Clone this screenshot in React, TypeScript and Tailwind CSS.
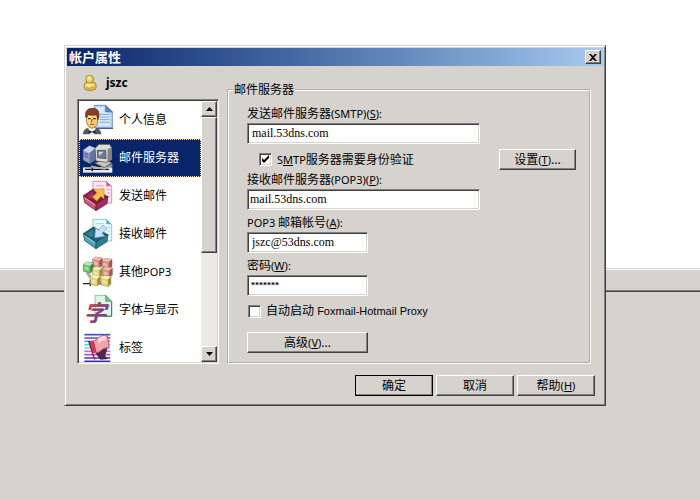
import type { ReactNode } from "react"

const FACE = "bg-[#d6d3ce]"
const RAISED =
  "border border-t-white border-l-white border-r-[#404040] border-b-[#404040] shadow-[inset_-1px_-1px_0_#808080]"
const SUNKEN =
  "border border-t-[#808080] border-l-[#808080] border-r-white border-b-white shadow-[inset_1px_1px_0_#404040,inset_-1px_-1px_0_#d6d3ce]"

// Latin runs sit one size below the Chinese text
function Latin({ children }: { children: ReactNode }) {
  return <span className="text-[11px]">{children}</span>
}

function Key({ letter }: { letter: string }) {
  return (
    <Latin>
      (<span className="underline underline-offset-1">{letter}</span>)
    </Latin>
  )
}

function PushButton({ children, className = "", primary = false }: { children: ReactNode; className?: string; primary?: boolean }) {
  return (
    <button
      type="button"
      className={`h-[21px] shrink-0 leading-4 ${FACE} ${RAISED} ${primary ? "outline outline-1 -outline-offset-1 outline-black" : ""} ${className}`}
    >
      {children}
    </button>
  )
}

function Field({ id, label, value, className }: { id: string; label: ReactNode; value: string; className: string }) {
  return (
    <div className="flex flex-col gap-px">
      <label htmlFor={id} className="leading-4">{label}</label>
      <input
        id={id}
        type="text"
        defaultValue={value}
        className={`h-[21px] bg-white font-['Liberation_Serif',serif] outline-none ${SUNKEN} ${className}`}
      />
    </div>
  )
}

function CheckBox({ id, checked = false, children }: { id: string; checked?: boolean; children: ReactNode }) {
  return (
    <div className="flex h-4 items-center gap-[5px]">
      <span className="grid">
        <input
          id={id}
          type="checkbox"
          defaultChecked={checked}
          className={`peer col-start-1 row-start-1 size-[13px] appearance-none bg-white ${SUNKEN}`}
        />
        <svg viewBox="0 0 13 13" className="pointer-events-none col-start-1 row-start-1 hidden size-[13px] peer-checked:block">
          <path d="M3 5v3l2 2 5-5V2L5 7z" fill="#000" />
        </svg>
      </span>
      <label htmlFor={id} className="leading-4">{children}</label>
    </div>
  )
}

/* ---------- icons ---------- */

function UserIcon() {
  return (
    <svg viewBox="0 0 42 48" className="h-4 w-[14px]">
      <defs>
        <radialGradient id="gold" cx="40%" cy="35%">
          <stop offset="0" stopColor="#fff6b4" />
          <stop offset="1" stopColor="#eabf45" />
        </radialGradient>
      </defs>
      <rect x="3" y="21" width="37" height="25" rx="12" fill="url(#gold)" stroke="#8a6a20" strokeWidth="2" />
      <circle cx="20" cy="13" r="12" fill="url(#gold)" stroke="#8a6a20" strokeWidth="2" />
      <path d="M10 38q10 5 20-1" fill="none" stroke="#c9962a" strokeWidth="3" />
    </svg>
  )
}

function PersonIcon() {
  return (
    <>
      <path d="M34 1h34l20 20v48H34z" fill="#b9d4f5" stroke="#4469ae" strokeWidth="2" />
      <path d="M40 6h24v14h18v42H40z" fill="#dbe9fb" />
      <path d="M68 1v20h20z" fill="#5b86c8" stroke="#36599c" strokeWidth="1.5" />
      <path d="M50 28h30M50 36h30M50 44h30M50 52h30" stroke="#7ea6dc" strokeWidth="3" />
      <path d="M36 70h54" stroke="#274684" strokeWidth="3" />
      <path d="M0 88q0-18 18-20h18q18 2 19 20z" fill="#565656" />
      <path d="M16 68h22l-4 20H20z" fill="#f4f4f4" />
      <path d="M17 75l10 5 10-5v11l-10-4-10 4z" fill="#222" />
      <path d="M10 27h34v25q-3 15-17 18Q13 66 10 50z" fill="#f7c871" stroke="#8a5424" strokeWidth="2" />
      <path d="M12 30h14v34q-11-4-13-16z" fill="#ffe674" />
      <path d="M8 36Q4 12 26 10q24-1 22 22l-3 12-4-15q-14 3-27 0l-2 9z" fill="#8a3f2a" stroke="#4b2414" strokeWidth="2" />
      <path d="M15 41h8M30 41h8" stroke="#3d2514" strokeWidth="4" />
      <path d="M26 42v9h-4M20 58h13" fill="none" stroke="#a94a24" strokeWidth="3" />
    </>
  )
}

function ServerIcon() {
  return (
    <>
      <path d="M0 73h88v16H0z" fill="#e8e8ea" />
      <path d="M6 79h72M28 73v12" stroke="#111" strokeWidth="4" />
      <path d="M0 22L19 8l19 8v34L20 62 0 52z" fill="#8e9cc8" stroke="#39446e" strokeWidth="2" />
      <path d="M0 22L19 8l19 8-18 14z" fill="#c9d1ec" />
      <path d="M20 30l18-14v34L20 62z" fill="#66739f" />
      <path d="M4 30l12 6M4 38l12 6" stroke="#4a5684" strokeWidth="3" />
      <path d="M34 60l32-10 22 10-24 14z" fill="#c7c7c2" stroke="#444" strokeWidth="2" />
      <path d="M36 16l12-12h32l6 10v36l-14 8-33-4z" fill="#dcdcd8" stroke="#454545" strokeWidth="2" />
      <path d="M74 18l12-5v36l-13 8z" fill="#84847f" />
      <path d="M43 22h25l1 25-25-3z" fill="#6c7c96" stroke="#303b50" strokeWidth="2" />
      <path d="M47 26h15l-14 13z" fill="#c3d0e0" />
      <path d="M24 70l40 8 24-12" fill="none" stroke="#b6b6b4" strokeWidth="5" />
    </>
  )
}

function TrayIcon({ tone, page, line, arrow, incoming = false }: { tone: string[]; page: string; line: string; arrow: string; incoming?: boolean }) {
  return (
    <>
      <path d="M30 1h40l16 15v50H30z" fill={page} stroke={line} strokeWidth="2" />
      <path d="M70 1v15h16z" fill={line} />
      <path d="M38 14h24M70 26h12M72 36h10M74 46h8" stroke={line} strokeWidth="1.5" />
      <path d="M1 44l30-20 44 23-36 22z" fill={tone[2]} stroke={tone[3]} strokeWidth="2" />
      <path d="M9 45l22-14v19l-10 5z" fill={tone[1]} />
      <path d="M1 44l38 25v20L5 65z" fill={tone[0]} stroke={tone[3]} strokeWidth="2" />
      <path d="M39 69l36-22-3 21-33 21z" fill={tone[1]} stroke={tone[3]} strokeWidth="2" />
      <path d="M5 51l33 22" stroke="#fff" strokeOpacity=".45" strokeWidth="3" />
      <path
        d={incoming ? "M60 18l12 11-15 14 9 9-31 4 3-30 9 8z" : "M32 26l31-3v31l-9-8-13 14-13-12 14-13z"}
        fill={arrow}
        stroke={incoming ? "#6f9bd0" : "#c98a20"}
        strokeWidth="2"
      />
    </>
  )
}

function Cube({ x, y, c }: { x: number; y: number; c: string[] }) {
  return (
    <g transform={`translate(${x} ${y})`}>
      <path d="M0 7l10-7 20 3v21l-9 9-21-5z" fill={c[0]} stroke={c[2]} strokeWidth="1.5" />
      <path d="M0 7l10-7 20 3-9 8z" fill={c[1]} />
      <path d="M21 11l9-8v21l-9 9z" fill={c[2]} />
      <path d="M4 13l12 3v10L4 23z" fill="#fff" fillOpacity=".4" />
    </g>
  )
}

function PopIcon() {
  const red = ["#d98a80", "#f1bbb0", "#9c5a54"]
  const green = ["#65c36b", "#b5eab2", "#3c8544"]
  const yellow = ["#e0d27a", "#fbf3b3", "#9a8c48"]
  return (
    <>
      <path d="M0 80h56M22 70v17" stroke="#222" strokeWidth="4" />
      <path d="M12 46l14 20" stroke="#aaa" strokeWidth="9" />
      <Cube x={28} y={0} c={red} />
      <Cube x={57} y={4} c={red} />
      <Cube x={1} y={15} c={green} />
      <Cube x={58} y={30} c={red} />
      <Cube x={28} y={29} c={yellow} />
      <Cube x={22} y={54} c={yellow} />
      <Cube x={54} y={56} c={yellow} />
    </>
  )
}

function FontIcon() {
  return (
    <>
      <defs>
        <linearGradient id="ink" x1="0" y1="0" x2="1" y2="1">
          <stop offset="0" stopColor="#e0492d" />
          <stop offset=".5" stopColor="#8d3f70" />
          <stop offset="1" stopColor="#5545b0" />
        </linearGradient>
      </defs>
      <path d="M36 1h32l18 18v44H36z" fill="#dff5e4" stroke="#5fae79" strokeWidth="2" />
      <path d="M68 1v18h18z" fill="#78c492" stroke="#3f8e5a" strokeWidth="2" />
      <path d="M86 20v44H64" fill="none" stroke="#3c7a50" strokeWidth="3" />
      <text x="4" y="79" fontSize="66" fontWeight="500" fill="url(#ink)" stroke="url(#ink)" strokeWidth="2" className="font-['Noto_Sans_CJK_SC',sans-serif] italic">
        字
      </text>
    </>
  )
}

function FlagIcon() {
  const stripes = ["#3a52cf", "#7a58d8", "#4aa7e4", "#49d5df", "#7ce0d4", "#c76be0", "#d83fc4", "#5846cc", "#3437b5"]
  return (
    <>
      {stripes.map((c, i) => (
        <path key={c} d={`M4 ${5 + i * 10}h78`} stroke={c} strokeWidth="5" />
      ))}
      <path d="M30 50l22 30 24-2-10-10 8-22z" fill="#4a2a44" />
      <path d="M18 26q14 2 24-8 14-14 32-9l4 34q-14 0-24 10-10 9-22 6z" fill="#f4a3ac" stroke="#a83048" strokeWidth="2" />
      <path d="M18 26q8 1 15-2l8 35q-5 1-9 0z" fill="#d23a52" />
      <path d="M44 17q11-10 24-9l2 14q-13 0-23 10z" fill="#fcd9dc" />
      <path d="M17 24l18 56" stroke="#7c2434" strokeWidth="4" />
    </>
  )
}

const items = [
  { label: "个人信息", icon: <PersonIcon /> },
  { label: "邮件服务器", icon: <ServerIcon />, selected: true },
  {
    label: "发送邮件",
    icon: <TrayIcon tone={["#d0557a", "#a52c54", "#7d1c40", "#5c1230"]} page="#fbe6f3" line="#c9609e" arrow="#f8c04a" />,
  },
  {
    label: "接收邮件",
    icon: <TrayIcon tone={["#4fa3b5", "#2e7f93", "#1e5f70", "#154350"]} page="#e9fafa" line="#5fb3b6" arrow="#c4e2fb" incoming />,
  },
  { label: <>其他<Latin>POP3</Latin></>, icon: <PopIcon /> },
  { label: "字体与显示", icon: <FontIcon /> },
  { label: "标签", icon: <FlagIcon /> },
]

function ScrollArrow({ down = false }: { down?: boolean }) {
  return (
    <button
      type="button"
      aria-label={down ? "向下" : "向上"}
      className={`flex h-4 w-full shrink-0 items-center justify-center ${FACE} ${RAISED}`}
    >
      <svg viewBox="0 0 7 4" className="h-1 w-[7px]">
        <path d={down ? "M0 0h7L3.500 4z" : "M0 4h7L3.500 0z"} fill="#000" />
      </svg>
    </button>
  )
}

function Sidebar() {
  return (
    <div className={`flex h-[265px] bg-white p-px ${SUNKEN}`}>
      <ul className="min-w-0 flex-1 overflow-hidden">
        {items.map((item, i) => (
          <li key={i}>
            <button
              type="button"
              className={`flex h-[38px] w-full items-center gap-[6px] border border-dotted pl-[3px] text-left ${
                item.selected ? "border-[#f5db95] bg-[#0a246a] text-white" : "border-transparent"
              }`}
            >
              <svg viewBox="0 0 90 90" className="size-[30px] shrink-0 overflow-visible">{item.icon}</svg>
              <span className="whitespace-nowrap">{item.label}</span>
            </button>
          </li>
        ))}
      </ul>
      <div className="flex w-4 shrink-0 flex-col bg-[#ebe9e6]">
        <ScrollArrow />
        <div className={`h-[136px] ${FACE} ${RAISED}`} />
        <div className="flex-1" />
        <ScrollArrow down />
      </div>
    </div>
  )
}

function ServerSettings() {
  return (
    <fieldset className="min-w-0 border-2 border-white pr-[13px] pb-[9px] pl-[18px] [border-style:groove]">
      <legend className="-ml-[14px] px-px leading-4">邮件服务器</legend>
      <div className="flex flex-col items-start pt-2">
        <Field
          id="smtp"
          label={<>发送邮件服务器<Latin>(SMTP)</Latin><Key letter="S" /><Latin>:</Latin></>}
          value="mail.53dns.com"
          className="w-[233px] px-1"
        />
        <div className="mt-[5px] flex w-full items-center justify-between pl-3">
          <CheckBox id="auth" checked>
            <Latin>S<span className="underline underline-offset-1">M</span>TP</Latin>服务器需要身份验证
          </CheckBox>
          <PushButton className="w-[77px]">设置<Key letter="T" />...</PushButton>
        </div>
        <div className="mt-[2px]">
          <Field
            id="pop"
            label={<>接收邮件服务器<Latin>(POP3)</Latin><Key letter="P" /><Latin>:</Latin></>}
            value="mail.53dns.com"
            className="w-[233px] px-[2px]"
          />
        </div>
        <div className="mt-[5px] flex flex-col gap-[5px]">
          <Field
            id="account"
            label={<><Latin>POP3 </Latin>邮箱帐号<Key letter="A" /><Latin>:</Latin></>}
            value="jszc@53dns.com"
            className="w-[121px] px-1"
          />
          <Field
            id="password"
            label={<>密码<Key letter="W" /><Latin>:</Latin></>}
            value="*******"
            className="w-[121px] px-[3px] text-[8px] font-bold"
          />
        </div>
        <div className="mt-[7px] pl-px">
          <CheckBox id="proxy">
            自动启动 <span className="font-['Liberation_Sans',sans-serif] text-[11px]">Foxmail-Hotmail Proxy</span>
          </CheckBox>
        </div>
        <PushButton className="mt-[13px] w-[121px]">高级<Key letter="V" />...</PushButton>
      </div>
    </fieldset>
  )
}

export default function App() {
  return (
    <main className="grid min-h-screen font-['Noto_Sans','Noto_Sans_CJK_SC',sans-serif] text-[12px] text-black">
      {/* Window behind the dialog */}
      <div className="col-start-1 row-start-1 flex flex-col bg-white">
        <div className="h-[268px]" />
        <div className="h-px bg-[#d6d3ce]" />
        <div className="mt-px h-5 bg-[#d6d3ce]" />
        <div className="h-[2px] border-t border-[#808080] bg-[#404040]" />
        <div className="flex-1 bg-[#d6d3ce]" />
      </div>

      {/* Dialog */}
      <div className="col-start-1 row-start-1 pt-[45px] pr-[94px] pb-6 pl-16">
        <section
          className={`border border-t-[#d6d3ce] border-r-[#404040] border-b-[#404040] border-l-[#d6d3ce] p-[2px] shadow-[inset_1px_1px_0_#fff,inset_-1px_-1px_0_#808080] ${FACE}`}
        >
          <header className="flex h-[18px] items-center justify-between bg-linear-to-r from-[#0a246a] to-[#a6caf0] pr-[2px] pl-[2px]">
            <h1 className="text-[13px] leading-4 font-bold text-white">帐户属性</h1>
            <button type="button" aria-label="关闭" className={`flex h-[14px] w-4 items-center justify-center ${FACE} ${RAISED}`}>
              <svg viewBox="0 0 8 7" className="h-[7px] w-2">
                <path d="M0 0h2l2 2 2-2h2L5 3.500 8 7H6L4 5 2 7H0l3-3.500z" fill="#000" />
              </svg>
            </button>
          </header>

          <div className="flex gap-2 pr-3 pl-[10px]">
            <div className="w-[142px] shrink-0">
              <div className="flex h-[33px] items-center gap-[9px] pl-[6px] text-[12px] font-bold">
                <UserIcon />
                <span>jszc</span>
              </div>
              <Sidebar />
            </div>
            <div className="min-w-0 flex-1 pt-4">
              <ServerSettings />
            </div>
          </div>

          <footer className="flex justify-end gap-[3px] pt-[11px] pr-2 pb-[7px]">
            <PushButton className="w-[78px]" primary>确定</PushButton>
            <PushButton className="w-[78px]">取消</PushButton>
            <PushButton className="w-[78px]">帮助<Key letter="H" /></PushButton>
          </footer>
        </section>
      </div>
    </main>
  )
}
